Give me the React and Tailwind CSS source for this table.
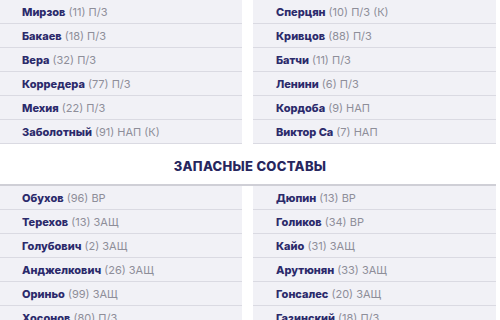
import React from 'react';

const starters = {
  home: [
    ['Мирзов', '(11) П/З'],
    ['Бакаев', '(18) П/З'],
    ['Вера', '(32) П/З'],
    ['Корредера', '(77) П/З'],
    ['Мехия', '(22) П/З'],
    ['Заболотный', '(91) НАП (К)'],
  ],
  away: [
    ['Сперцян', '(10) П/З (К)'],
    ['Кривцов', '(88) П/З'],
    ['Батчи', '(11) П/З'],
    ['Ленини', '(6) П/З'],
    ['Кордоба', '(9) НАП'],
    ['Виктор Са', '(7) НАП'],
  ],
};

const subs = {
  home: [
    ['Обухов', '(96) ВР'],
    ['Терехов', '(13) ЗАЩ'],
    ['Голубович', '(2) ЗАЩ'],
    ['Анджелкович', '(26) ЗАЩ'],
    ['Ориньо', '(99) ЗАЩ'],
    ['Хосонов', '(80) П/З'],
  ],
  away: [
    ['Дюпин', '(13) ВР'],
    ['Голиков', '(34) ВР'],
    ['Кайо', '(31) ЗАЩ'],
    ['Арутюнян', '(33) ЗАЩ'],
    ['Гонсалес', '(20) ЗАЩ'],
    ['Газинский', '(18) П/З'],
  ],
};

const PlayerRow = ({ name, info, inset }) => (
  <div
    className={`flex items-center pt-[1px] h-[24px] bg-[#f1f1f6] border-b border-[#dadae2] text-[11px] leading-none whitespace-nowrap ${inset}`}
  >
    <span className="font-extrabold text-[#2b2a6b]">{name}</span>
    <span className="ml-[3px] text-[#8e8e99]">{info}</span>
  </div>
);

const Lineup = ({ team }) => (
  <div className="grid grid-cols-[242px_243px] gap-x-[11px]">
    <div className="flex flex-col">
      {team.home.map(([n, i]) => (
        <PlayerRow key={n} name={n} info={i} inset="pl-[22px]" />
      ))}
    </div>
    <div className="flex flex-col">
      {team.away.map(([n, i]) => (
        <PlayerRow key={n} name={n} info={i} inset="pl-[23px]" />
      ))}
    </div>
  </div>
);

export default function App() {
  return (
    <div
      className="w-[500px] h-[320px] overflow-hidden bg-white"
      style={{ fontFamily: 'Inter, "Noto Sans", sans-serif' }}
    >
      <Lineup team={starters} />
      <div className="h-[40px] flex items-end justify-center pb-[8px]">
        <h2 className="text-[13px] font-extrabold text-[#26265e] tracking-[0.3px]">ЗАПАСНЫЕ СОСТАВЫ</h2>
      </div>
      <div className="w-[496px] h-[2px] bg-[#cfcfd6]" />
      <Lineup team={subs} />
    </div>
  );
}
